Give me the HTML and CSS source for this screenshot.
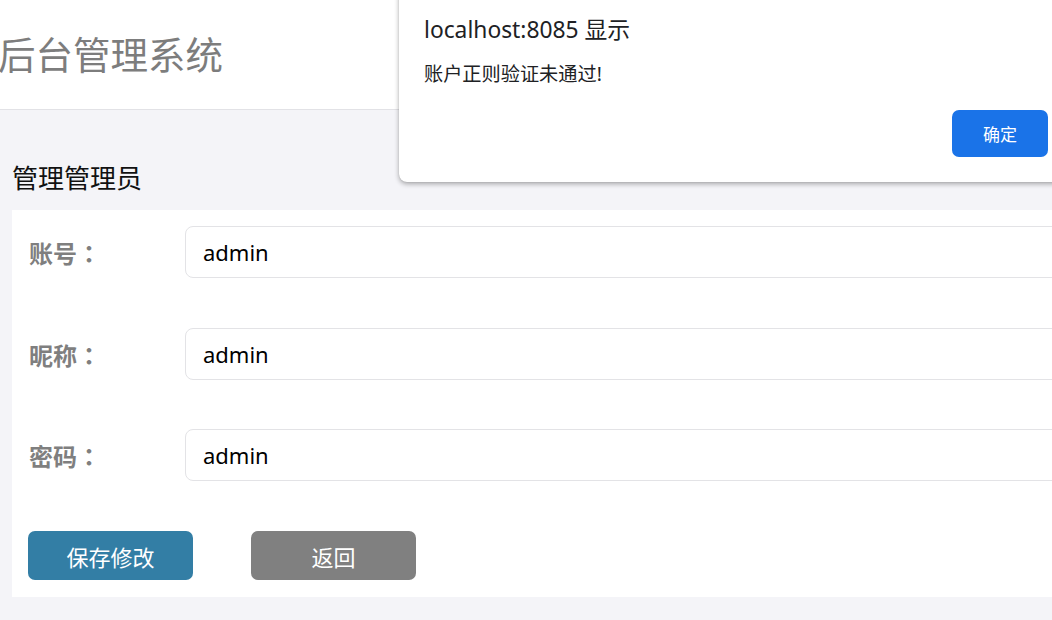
FILE: index.html
```html
<!DOCTYPE html>
<html lang="zh-CN">
<head>
<meta charset="utf-8">
<title>后台管理系统</title>
<link rel="stylesheet" href="styles.css">
</head>
<body>
<div class="page">
  <header class="header">
    <h1 class="brand">后台管理系统</h1>
  </header>
  <main class="main">
    <h2 class="section-title">管理管理员</h2>
    <form class="card">
      <div class="row">
        <label class="label">账号<span class="colon">：</span></label>
        <div class="input">admin</div>
      </div>
      <div class="row">
        <label class="label">昵称<span class="colon">：</span></label>
        <div class="input">admin</div>
      </div>
      <div class="row">
        <label class="label">密码<span class="colon">：</span></label>
        <div class="input">admin</div>
      </div>
      <div class="actions">
        <button type="button" class="btn btn-save">保存修改</button>
        <button type="button" class="btn btn-back">返回</button>
      </div>
    </form>
  </main>
</div>
<div class="dialog">
  <div class="dialog-title">localhost:8085 显示</div>
  <div class="dialog-msg">账户正则验证未通过!</div>
  <div class="dialog-actions">
    <button type="button" class="dialog-btn">确定</button>
  </div>
</div>
</body>
</html>
```

FILE: styles.css
```css
html, body {
  margin: 0;
  padding: 0;
  overflow: hidden;
  height: 100%;
}
body {
  background: #f4f4f8;
  font-family: "Noto Sans", "Noto Sans CJK SC", sans-serif;
  position: relative;
}
.page {
  width: 1100px;
}
.header {
  height: 109px;
  background: #ffffff;
  border-bottom: 1px solid #e2e2e6;
  display: flex;
  align-items: center;
}
.brand {
  margin: 0 0 0 -2px;
  font-size: 37.5px;
  font-weight: normal;
  color: #7d7d7d;
  line-height: 1;
}
.main {
  padding: 0 0 0 12px;
}
.section-title {
  margin: 0;
  padding-top: 50px;
  height: 50px;
  font-size: 26px;
  font-weight: normal;
  color: #111;
  line-height: 36px;
}
.card {
  background: #ffffff;
  padding: 16px 0 17px 17px;
  display: flex;
  flex-direction: column;
}
.row {
  display: flex;
  align-items: center;
  height: 52px;
  margin-bottom: 50px;
}
.row:nth-child(2) { margin-bottom: 49px; }
.label {
  width: 156px;
  flex: none;
  font-family: "Noto Sans CJK SC", sans-serif;
  font-size: 24px;
  font-weight: 700;
  color: #7f7f7f;
  display: flex;
  align-items: center;
}
.colon {
  display: inline-block;
  width: 19px;
  overflow: visible;
  text-align: center;
  font-family: "Noto Sans CJK JP", "Noto Sans CJK SC", sans-serif;
}
.input {
  flex: 1;
  box-sizing: border-box;
  height: 52px;
  border: 1px solid #e3e3e6;
  border-radius: 8px;
  padding-left: 17px;
  display: flex;
  align-items: center;
  font-size: 22px;
  color: #000;
}
.actions {
  display: flex;
  gap: 58px;
  margin-left: -1px;
}
.btn {
  width: 165px;
  height: 49px;
  border: none;
  border-radius: 7px;
  color: #ffffff;
  font-family: "Noto Sans", "Noto Sans CJK SC", sans-serif;
  font-size: 22px;
  padding: 0;
}
.btn-save { background: #337ea5; }
.btn-back { background: #808080; }

.dialog {
  position: absolute;
  left: 399px;
  top: -12px;
  width: 680px;
  height: 194px;
  box-sizing: border-box;
  background: #ffffff;
  border-radius: 8px;
  box-shadow: 0 2px 5px rgba(0,0,0,0.32), 0 0 1px rgba(0,0,0,0.2);
  padding: 27px 0 0 25px;
}
.dialog-title {
  font-size: 22.8px;
  color: #202124;
  line-height: 30px;
}
.dialog-msg {
  font-size: 19.2px;
  color: #202124;
  line-height: 26px;
  margin-top: 16px;
}
.dialog-actions {
  display: flex;
  margin-top: 23px;
  padding-left: 528px;
}
.dialog-btn {
  width: 96px;
  height: 47px;
  border: none;
  border-radius: 7px;
  background: #1a73e8;
  color: #ffffff;
  font-family: "Noto Sans", "Noto Sans CJK SC", sans-serif;
  font-size: 17px;
  padding: 0;
}
```
